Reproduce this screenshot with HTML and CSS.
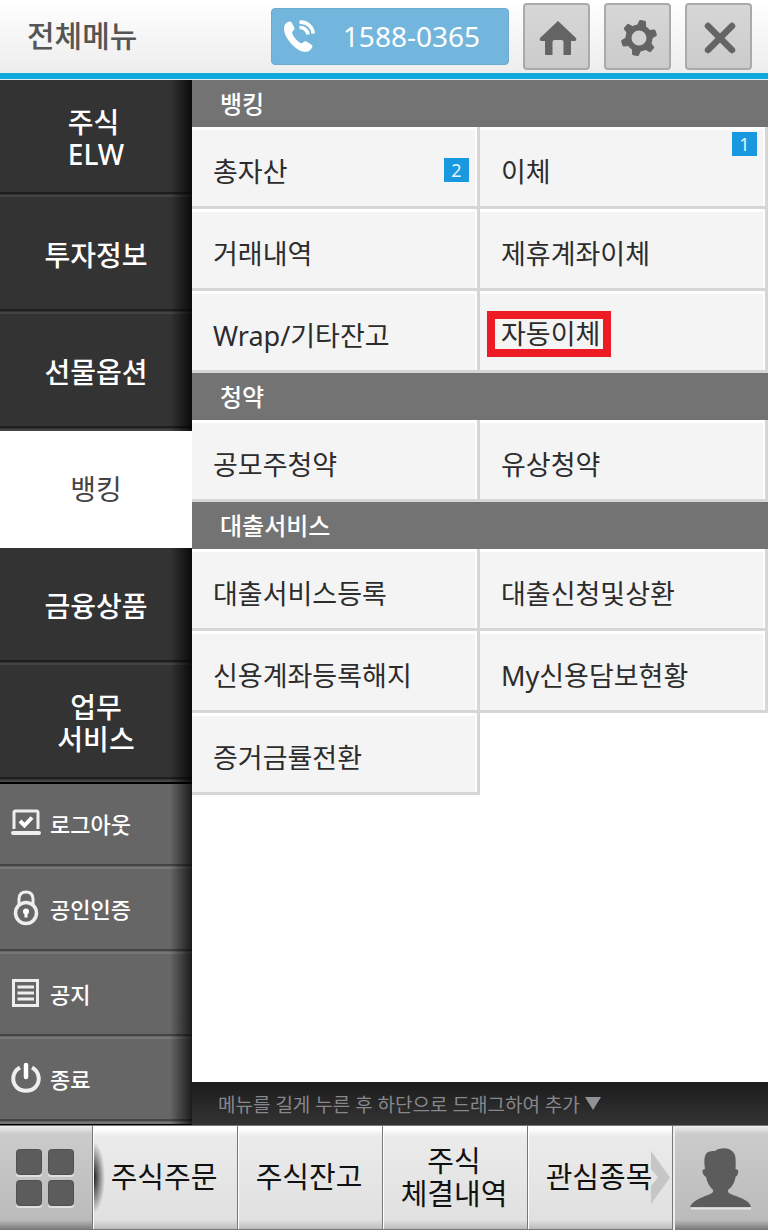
FILE: index.html
```
<!DOCTYPE html>
<html lang="ko">
<head>
    <meta charset="UTF-8">
    <meta name="viewport" content="width=device-width, initial-scale=1.0">
    <title>전체메뉴</title>
    <link rel="stylesheet" href="styles.css">
</head>
<body>
    <!-- Header -->
    <header class="top-bar">
        <h1>전체메뉴</h1>
        <a class="phone" href="tel:1588-0365">
            <svg width="34" height="34" viewBox="0 0 34 34" aria-hidden="true">
                <path d="M3 5.500C5 3 8 1.500 9.500 3.200L12.500 9C13.200 10.800 9.500 12 10.200 14.200C11.500 18 15 22 18.500 24C20.500 25 22 21.500 24 22.300L30 26C31.500 27.500 29 30.500 27 32C22 34.500 15.500 31.500 9 24.500C2.500 17.500 .5 10 3 5.500Z" fill="#fff"/>
                <path d="M17.500 3.200C25 2.500 30.500 8 31.300 14.500M17.500 8.500C22 8.200 25.500 11.500 26 15.500" fill="none" stroke="#fff" stroke-width="3.600"/>
            </svg>
            <span>1588-0365</span>
        </a>
        <button class="tool" aria-label="홈">
            <svg width="38" height="34" viewBox="0 0 38 34" aria-hidden="true">
                <path d="M19 0L37 17Q38 20 35.500 20H32V33Q32 34 31 34H24.500V21Q24.500 19 22.500 19H15.500Q13.500 19 13.500 21V34H7Q6 34 6 33V20H2.500Q0 20 1 17Z" fill="#646464"/>
            </svg>
        </button>
        <button class="tool" aria-label="설정">
            <svg width="38" height="38" viewBox="0 0 38 38" aria-hidden="true">
                <g transform="rotate(12 19 19)" fill="#646464">
                    <path id="tooth" d="M14 9L15.500 2Q15.700 1 17 1H21Q22.300 1 22.500 2L24 9Z"/>
                    <use href="#tooth" transform="rotate(60 19 19)"/>
                    <use href="#tooth" transform="rotate(120 19 19)"/>
                    <use href="#tooth" transform="rotate(180 19 19)"/>
                    <use href="#tooth" transform="rotate(240 19 19)"/>
                    <use href="#tooth" transform="rotate(300 19 19)"/>
                </g>
                <circle cx="19" cy="19" r="10.500" fill="none" stroke="#646464" stroke-width="6"/>
            </svg>
        </button>
        <button class="tool" aria-label="닫기">
            <svg width="32" height="32" viewBox="0 0 32 32" aria-hidden="true">
                <path d="M4 4L28 28M28 4L4 28" stroke="#646464" stroke-width="6.500" stroke-linecap="round"/>
            </svg>
        </button>
    </header>

    <div class="content">
        <!-- Sidebar -->
        <nav class="sidebar">
            <button class="category">
                <span>주식<br>ELW</span>
            </button>
            <button class="category">투자정보</button>
            <button class="category">선물옵션</button>
            <button class="category active">뱅킹</button>
            <button class="category">금융상품</button>
            <button class="category">
                <span class="centered">업무<br>서비스</span>
            </button>
            <div class="utilities">
                <button class="utility">
                    <svg width="32" height="36" viewBox="0 0 32 36" fill="none" stroke="#eee" aria-hidden="true">
                        <path d="M4 24V7.500Q4 6 5.500 6H26.500Q28 6 28 7.500V24" stroke-width="3"/>
                        <path d="M3 28H29" stroke-width="4" stroke-linecap="round"/>
                        <path d="M10 16L14.500 20.500L22 12.500" stroke="#fff" stroke-width="4"/>
                    </svg>
                    로그아웃
                </button>
                <button class="utility">
                    <svg width="32" height="36" viewBox="0 0 32 36" fill="none" stroke="#eee" aria-hidden="true">
                        <path d="M9 14V8.500Q9.500 2 16 2Q22.500 2 23 8.500V14" stroke-width="3"/>
                        <circle cx="16" cy="23" r="10.500" stroke-width="3.500"/>
                        <circle cx="16" cy="21.500" r="3" fill="#fff" stroke="none"/>
                        <path d="M16 22V27.500" stroke="#fff" stroke-width="3"/>
                    </svg>
                    공인인증
                </button>
                <button class="utility">
                    <svg width="32" height="36" viewBox="0 0 32 36" fill="none" stroke="#eee" aria-hidden="true">
                        <rect x="3.500" y="5.500" width="24" height="25" stroke-width="3"/>
                        <path d="M7.500 12H24M7.500 18H24M7.500 24H24" stroke-width="2.800"/>
                    </svg>
                    공지
                </button>
                <button class="utility">
                    <svg width="32" height="36" viewBox="0 0 32 36" fill="none" stroke="#eee" aria-hidden="true">
                        <path d="M10 7.500C2 12 1.500 21.500 6.500 27C11.500 32 20.500 32 25.500 27C30.500 21.500 30 12 22 7.500" stroke-width="4"/>
                        <path d="M16 5V17" stroke="#fff" stroke-width="4.500" stroke-linecap="round"/>
                    </svg>
                    종료
                </button>
            </div>
        </nav>

        <!-- Menu list -->
        <main class="menu">
            <h2>뱅킹</h2>
            <div class="items">
                <button class="item">총자산 <span class="badge">2</span></button>
                <button class="item">이체 <span class="badge badge-top">1</span></button>
                <button class="item">거래내역</button>
                <button class="item">제휴계좌이체</button>
                <button class="item">Wrap/기타잔고</button>
                <button class="item"><span class="highlight">자동이체</span></button>
            </div>
            <h2>청약</h2>
            <div class="items">
                <button class="item">공모주청약</button>
                <button class="item">유상청약</button>
            </div>
            <h2>대출서비스</h2>
            <div class="items">
                <button class="item">대출서비스등록</button>
                <button class="item">대출신청및상환</button>
                <button class="item">신용계좌등록해지</button>
                <button class="item">My신용담보현황</button>
                <button class="item">증거금률전환</button>
            </div>
            <p class="hint">
                메뉴를 길게 누른 후 하단으로 드래그하여 추가
                <svg width="16" height="13" viewBox="0 0 16 13" aria-hidden="true"><path d="M0 0H16L8 13Z" fill="#919196"/></svg>
            </p>
        </main>
    </div>

    <!-- Quick menu -->
    <footer class="quick-bar">
        <button class="quick-icon" aria-label="전체메뉴">
            <svg width="60" height="60" viewBox="0 0 60 60" aria-hidden="true">
                <g fill="#e0e0e0">
                    <rect x="1" y="3" width="26" height="26" rx="3"/>
                    <rect x="33" y="3" width="26" height="26" rx="3"/>
                    <rect x="1" y="34" width="26" height="26" rx="3"/>
                    <rect x="33" y="34" width="26" height="26" rx="3"/>
                </g>
                <g fill="#5c5c5c" stroke="#505050">
                    <rect x="1.500" y="1.500" width="25" height="25" rx="3"/>
                    <rect x="33.500" y="1.500" width="25" height="25" rx="3"/>
                    <rect x="1.500" y="32.500" width="25" height="25" rx="3"/>
                    <rect x="33.500" y="32.500" width="25" height="25" rx="3"/>
                </g>
            </svg>
        </button>
        <button class="quick first">주식주문</button>
        <button class="quick">주식잔고</button>
        <button class="quick">주식<br>체결내역</button>
        <button class="quick">관심종목
            <svg class="next" width="19" height="53" viewBox="0 0 19 53" aria-hidden="true"><path d="M0 0L19 26.500L0 53V35L7 26.500L0 18Z" fill="#c6c6c6"/></svg>
        </button>
        <button class="quick-icon" aria-label="내 정보">
            <svg width="62" height="62" viewBox="0 0 62 62" aria-hidden="true">
                <path d="M1 60.500H61" stroke="#e4e4e4" stroke-width="2"/>
                <path d="M0 59C2 54 8 51 15 48C20 46 24 45 23 42C19 38 17 34 16 29C14 28 12 25 12.500 22L15 21C14 15 14 9 16 6C18 3 22 3 25 3C29 0 37-1 42 3C46 6 46 11 45.500 21L48 22C49 25 47 28 45.500 29C45 34 42 39 38 42C37 45 41 46 46 48C54 51 60 54 61 59Z" fill="#5c5c5c"/>
            </svg>
        </button>
    </footer>
</body>
</html>
```
FILE: styles.css
```
* {
    box-sizing: border-box;
}

body {
    display: flex;
    flex-direction: column;
    min-height: 100vh;
    margin: 0;
    font-family: "Noto Sans", "Noto Sans CJK KR", sans-serif;
    background-color: #fff;
    color: #333;
}

h1, h2, p {
    margin: 0;
    font-weight: 400;
}

button {
    margin: 0;
    padding: 0;
    border: none;
    border-radius: 0;
    font-family: inherit;
    cursor: pointer;
}

svg {
    display: block;
    flex: none;
}

/* Header */
.top-bar {
    display: flex;
    align-items: flex-start;
    gap: 14px;
    height: 80px;
    padding: 3px 16px 0 27px;
    border-bottom: 1px solid #d8eef2;
    background: linear-gradient(#fff, #ededed 73px, #0fa9dd 73px);
}

.top-bar h1 {
    flex: 1;
    font-size: 30px;
    font-weight: 500;
    line-height: 66px;
    color: #555;
}

.phone {
    display: flex;
    align-items: center;
    justify-content: space-between;
    width: 238px;
    height: 57px;
    margin-top: 5px;
    padding: 0 28px 2px 10px;
    border: 1px solid #69acd0;
    border-radius: 4px;
    background-color: #73b6dd;
    color: #fff;
    font-size: 28px;
    text-decoration: none;
}

.tool {
    display: flex;
    align-items: center;
    justify-content: center;
    width: 67px;
    height: 67px;
    padding: 3px 0 0 3px;
    border: 2px solid #aaa;
    border-radius: 4px;
    background: linear-gradient(#d7d7d7, #cbcbcb);
}

/* Sidebar */
.content {
    display: grid;
    grid-template-columns: 1fr 3fr;
    flex: 1;
}

.sidebar {
    display: flex;
    flex-direction: column;
    background-color: #000;
}

.category {
    height: 117px;
    padding-bottom: 2px;
    background:
        linear-gradient(to right, transparent calc(100% - 22px), #000c),
        linear-gradient(#333 112px, #1e1e1e 112px, #1e1e1e 114px, #333 114px, #333 115px, #444 115px);
    color: #fff;
    font-size: 28px;
    font-weight: 500;
    line-height: 32px;
}

.category span {
    display: inline-block;
    text-align: left;
}

.category .centered {
    text-align: center;
}

.category.active {
    background: #fff;
    color: #444;
    font-weight: 400;
}

.utilities {
    padding: 2px 0 1px;
}

.utility {
    display: flex;
    align-items: center;
    gap: 8px;
    width: 100%;
    height: 85px;
    padding: 0 10px 8px;
    background:
        linear-gradient(to right, transparent calc(100% - 22px), #000b),
        linear-gradient(#666 80px, #444 80px, #444 82px, #666 82px, #666 83px, #777 83px);
    color: #fff;
    font-size: 22px;
    font-weight: 500;
}

/* Menu list */
.menu {
    display: flex;
    flex-direction: column;
}

.menu h2 {
    padding-left: 28px;
    background-color: #737373;
    color: #fff;
    font-size: 24px;
    font-weight: 500;
    line-height: 47px;
}

.items {
    display: grid;
    grid-template-columns: 1fr 1fr;
}

.item {
    display: flex;
    align-items: center;
    justify-content: space-between;
    position: relative;
    height: 82px;
    padding: 7px 8px 0 21px;
    border-right: 3px solid #d6d6d6;
    border-bottom: 3px solid #d6d6d6;
    background-color: #f4f4f4;
    box-shadow: inset 0 3px #fff, inset -2px 0 #fff;
    color: #2c2c2c;
    font-size: 27px;
}

.badge {
    width: 25px;
    background-color: #1898df;
    color: #e4f4fc;
    font-size: 18px;
    line-height: 24px;
    text-align: center;
}

.badge-top {
    position: absolute;
    top: 5px;
    right: 8px;
}

.highlight {
    margin-left: -14px;
    padding: 0 3px 0 6px;
    border: 8px solid #ed1c24;
    line-height: 30px;
}

.hint {
    display: flex;
    align-items: center;
    gap: 5px;
    height: 43px;
    margin-top: auto;
    padding-left: 26px;
    background: linear-gradient(#1c1c1c, #333);
    color: #87878c;
    font-size: 19px;
}

/* Quick menu */
.quick-bar {
    display: grid;
    grid-template-columns: 93px repeat(4, 1fr) 95px;
    height: 105px;
    border-top: 1px solid #777;
}

.quick, .quick-icon {
    position: relative;
    border-right: 1px solid #777;
}

.quick {
    padding: 0 2px 2px 0;
    border-bottom: 1px solid #777;
    background: linear-gradient(#fff 3px, #ebebeb 10px, #e0e0e0 94px, #bbb);
    box-shadow: inset 1px 0 #fff;
    color: #111;
    font-size: 29px;
    line-height: 33px;
}

.quick.first {
    background:
        radial-gradient(ellipse 12px 36px at 0 50%, #111, transparent),
        linear-gradient(#fff 3px, #ebebeb 10px, #e0e0e0 94px, #bbb);
}

.quick-icon {
    display: flex;
    align-items: center;
    justify-content: center;
    padding-right: 2px;
    background: linear-gradient(#eee, #cbcbcb 8px, #bbb 94px, #777);
}

.quick-icon:last-child {
    padding: 2px 0 0 0;
    border-right: none;
    box-shadow: inset 2px 0 #eee;
}

.next {
    position: absolute;
    top: 25px;
    right: 2px;
}
```
